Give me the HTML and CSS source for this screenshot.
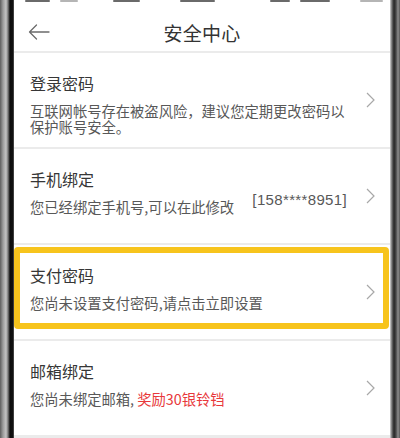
FILE: index.html
```html
<!DOCTYPE html>
<html lang="zh-CN">
<head>
<meta charset="utf-8">
<title>安全中心</title>
<link rel="stylesheet" href="styles.css">
</head>
<body>
<div class="bezel-left"></div>
<div class="screen">
  <div class="top">
    <div class="status">
      <span class="mark m1"></span>
      <span class="mark m2 light"></span>
      <span class="mark m3"></span>
      <span class="mark m4"></span>
      <span class="mark m5"></span>
      <span class="mark m6"></span>
      <span class="mark m7 light"></span>
    </div>
    <div class="header">
      <svg class="back" width="22" height="16" viewBox="0 0 22 16">
        <path d="M21 8H1.5M8.5 1L1.5 8l7 7" fill="none" stroke="#6b6b6b" stroke-width="1.3" stroke-linecap="round" stroke-linejoin="round"/>
      </svg>
      <div class="title">安全中心</div>
    </div>
  </div>

  <div class="row">
    <div class="text">
      <div class="name">登录密码</div>
      <div class="desc wide">互联网帐号存在被盗风险，建议您定期更改密码以保护账号安全。</div>
    </div>
    <svg class="chev" width="9" height="16" viewBox="0 0 9 16"><path d="M1 1l7 7-7 7" fill="none" stroke="#a8a8a8" stroke-width="1.2"/></svg>
  </div>

  <div class="row">
    <div class="text">
      <div class="name">手机绑定</div>
      <div class="desc">您已经绑定手机号,可以在此修改</div>
    </div>
    <div class="phone">[158****8951]</div>
    <svg class="chev" width="9" height="16" viewBox="0 0 9 16"><path d="M1 1l7 7-7 7" fill="none" stroke="#a8a8a8" stroke-width="1.2"/></svg>
  </div>

  <div class="row highlight">
    <div class="text">
      <div class="name">支付密码</div>
      <div class="desc">您尚未设置支付密码,请点击立即设置</div>
    </div>
    <svg class="chev" width="9" height="16" viewBox="0 0 9 16"><path d="M1 1l7 7-7 7" fill="none" stroke="#a8a8a8" stroke-width="1.2"/></svg>
  </div>

  <div class="row">
    <div class="text">
      <div class="name">邮箱绑定</div>
      <div class="desc">您尚未绑定邮箱, <span class="red">奖励30银铃铛</span></div>
    </div>
    <svg class="chev" width="9" height="16" viewBox="0 0 9 16"><path d="M1 1l7 7-7 7" fill="none" stroke="#a8a8a8" stroke-width="1.2"/></svg>
  </div>
</div>
<div class="bezel-right"></div>
</body>
</html>
```

FILE: styles.css
```css
html, body {
  margin: 0;
  padding: 0;
}
body {
  width: 400px;
  height: 438px;
  overflow: hidden;
  display: flex;
  background: #222;
  font-family: "Noto Sans CJK SC", "Liberation Sans", sans-serif;
}
.bezel-left {
  width: 14px;
  flex: none;
  background: linear-gradient(to right, #5e5e5e 0, #9c9c9c 3px, #c4c4c4 6px, #7a7a7a 8px, #0c0c0c 10px, #111 13px, #6a6a6a 14px);
}
.bezel-right {
  width: 10px;
  flex: none;
  background: linear-gradient(to right, #d6d6d6 0, #6d6d6d 2px, #262626 4px, #4a4a4a 6px, #8d8d8d 8px, #555 10px);
}
.screen {
  width: 376px;
  flex: none;
  background: #ebebeb;
  display: flex;
  flex-direction: column;
  gap: 2px;
}
.top {
  background: #fff;
}
.status {
  height: 4px;
  display: flex;
  align-items: flex-start;
}
.mark {
  height: 2px;
  background: #6a6a6a;
  border-radius: 1px;
}
.mark.light { background: #b5b5b5; }
.m1 { margin-left: 11px; width: 25px; }
.m2 { margin-left: 10px; width: 18px; }
.m3 { margin-left: 35px; width: 27px; }
.m4 { margin-left: 40px; width: 35px; }
.m5 { margin-left: 55px; width: 20px; }
.m6 { margin-left: 10px; width: 30px; }
.m7 { margin-left: 30px; width: 23px; }

.header {
  height: 47px;
  box-sizing: border-box;
  padding-top: 9px;
  display: flex;
  align-items: center;
  justify-content: center;
  position: relative;
}
.back {
  position: absolute;
  left: 14px;
  top: 20px;
}
.title {
  font-size: 19px;
  color: #333;
  letter-spacing: 0.3px;
}

.row {
  position: relative;
  background: #fff;
  height: 94px;
  box-sizing: border-box;
  padding: 0 15px 0 16px;
  display: flex;
  align-items: center;
}
.row:first-of-type { height: 95px; }
.text {
  align-self: flex-start;
  padding-top: 20px;
  flex: 1;
}
.name {
  font-size: 16px;
  line-height: 20px;
  color: #363636;
}
.desc {
  margin-top: 10px;
  font-size: 14.3px;
  line-height: 15.5px;
  color: #585858;
}
.desc.wide { width: 322px; }
.red { color: #e8383b; }
.phone {
  font-family: "Liberation Sans", sans-serif;
  font-size: 15px;
  color: #585858;
  letter-spacing: 0.35px;
  margin-right: 19px;
  margin-top: 6px;
}
.chev {
  flex: none;
}
.highlight::after {
  content: "";
  position: absolute;
  left: 0;
  right: 1px;
  top: 2px;
  bottom: 10px;
  border: 6px solid #f7c41d;
  border-radius: 4px;
}
```
